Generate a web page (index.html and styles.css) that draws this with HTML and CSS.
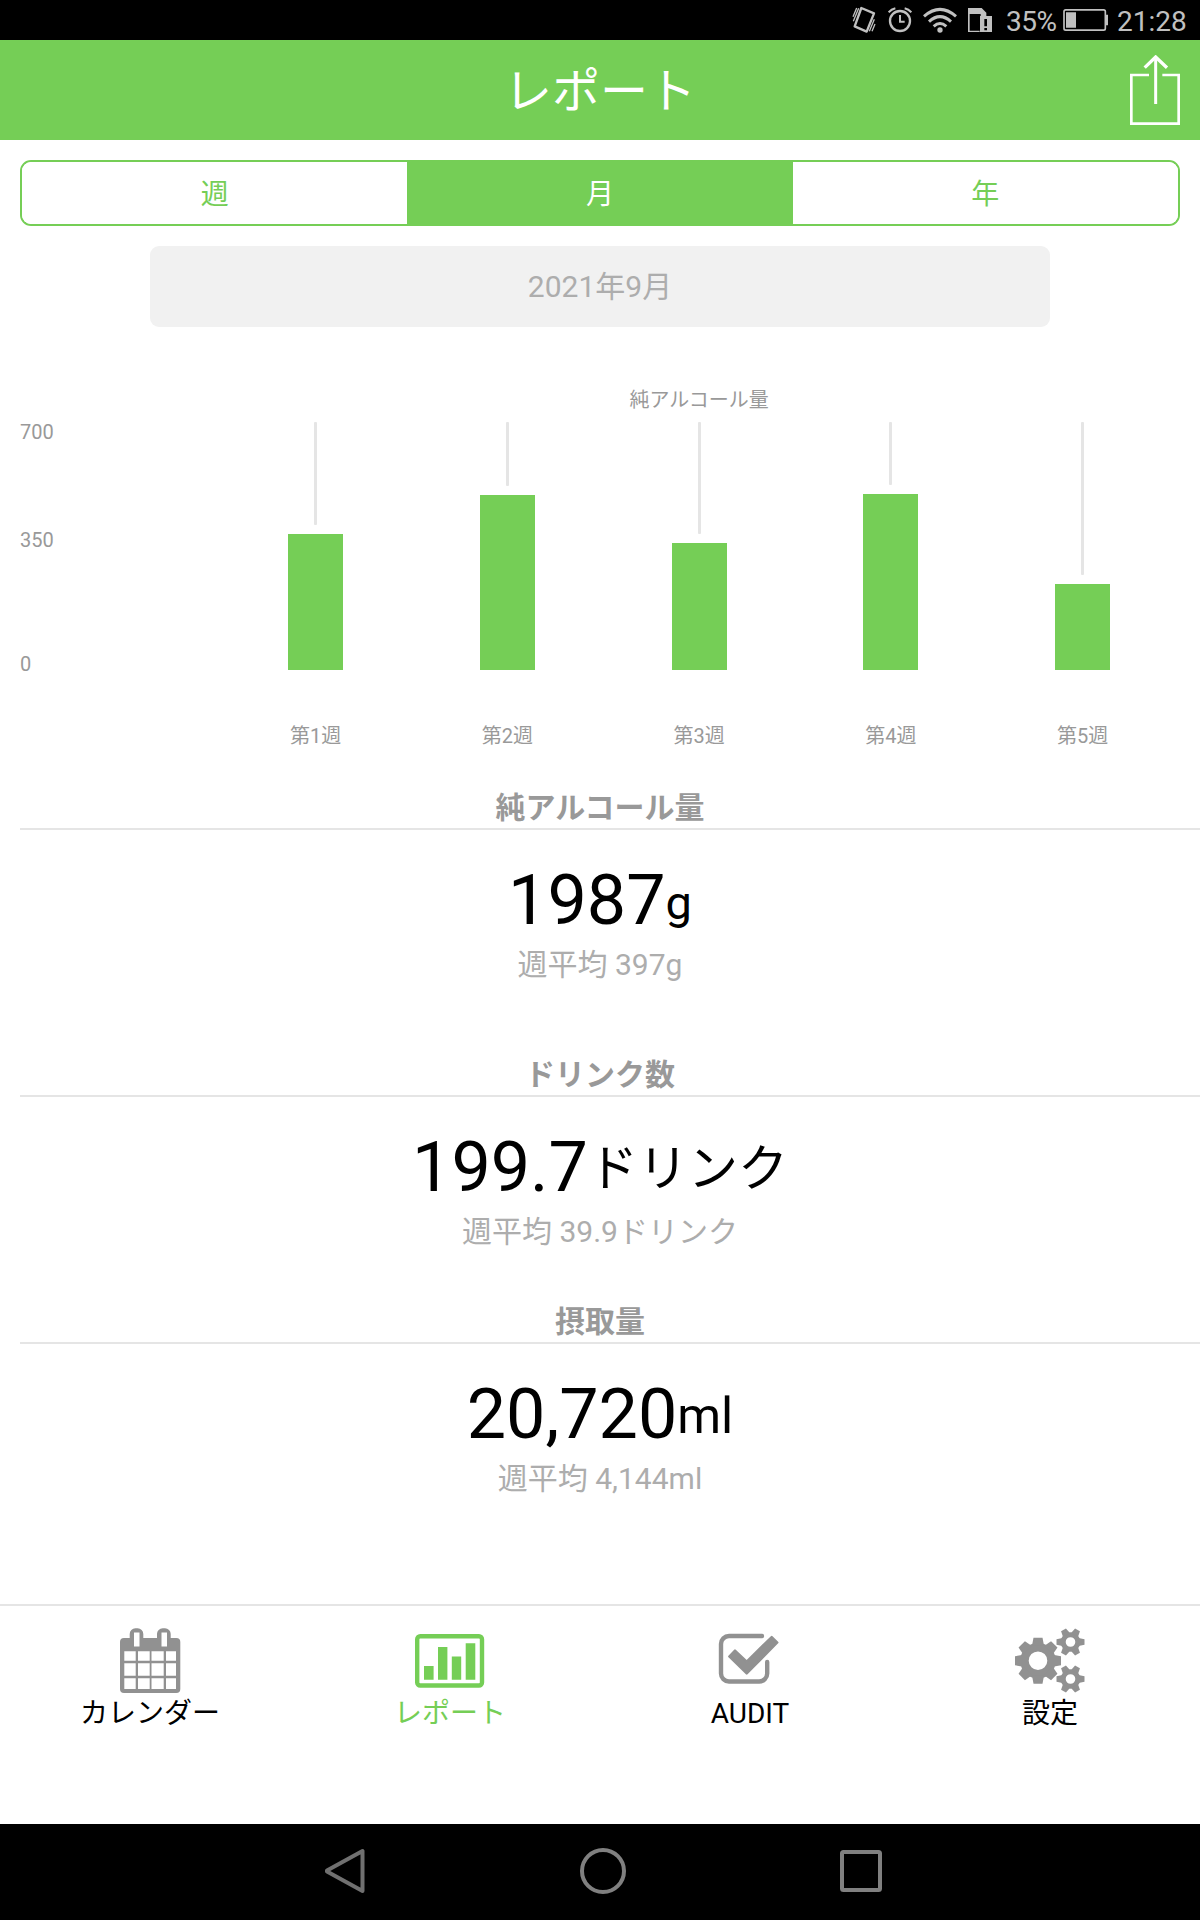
FILE: index.html
```html
<!DOCTYPE html>
<html lang="ja">
<head>
    <meta charset="UTF-8">
    <meta name="viewport" content="width=device-width, initial-scale=1.0">
    <title>レポート</title>
    <link rel="stylesheet" href="styles.css">
</head>
<body>
    <!-- Status bar -->
    <div class="status-bar">
        <svg class="vibrate" width="24" height="40" viewBox="0 0 72 120" fill="none" stroke="#c0c0c0">
            <path d="M28 24L66 40L44 95L8 79Z" stroke-width="7" stroke-linejoin="round"/>
            <path d="M3 50L14 24M4 64L20 25M52 94L67 58M60 94L69 72" stroke-width="4"/>
        </svg>
        <svg class="alarm" width="24" height="40" viewBox="0 0 72 120" fill="none" stroke="#c0c0c0">
            <circle cx="36" cy="63" r="30" stroke-width="7"/>
            <path d="M36 45V65H50" stroke-width="6"/>
            <path d="M2 37Q10 28 22 25M50 25Q62 28 70 37" stroke-width="6"/>
        </svg>
        <svg class="wifi" width="34" height="40" viewBox="0 0 102 120" fill="none" stroke="#c0c0c0" stroke-width="9">
            <path d="M3 49Q51 7 99 49M18 65Q51 35 84 65M32 79Q51 62 70 79"/>
            <circle cx="51" cy="90" r="8" fill="#c0c0c0" stroke="none"/>
        </svg>
        <svg class="sdcard" width="24" height="40" viewBox="0 0 72 120">
            <path d="M0 24H41L55 38V48H38V42H5V92H35V96H0Z" fill="#c0c0c0"/>
            <path d="M36 48H72V96H36Z" fill="#c0c0c0"/>
            <path d="M53 57V79M53 84V91" stroke="#000" stroke-width="8"/>
        </svg>
        <span class="percent">35%</span>
        <svg class="battery" width="45" height="40" viewBox="0 0 135 120">
            <rect x="3" y="29.500" width="124" height="61" rx="5" fill="none" stroke="#c0c0c0" stroke-width="5"/>
            <path d="M9 37H39V83H9ZM128 44H135V76H128Z" fill="#c0c0c0"/>
        </svg>
        <span class="clock">21:28</span>
    </div>

    <header class="header">
        <h1>レポート</h1>
        <svg class="share" width="50" height="70" viewBox="0 0 150 210" fill="none" stroke="#fff">
            <path d="M57 60H4V206H146V60H97" stroke-width="8"/>
            <path d="M77 8V147" stroke-width="9"/>
            <path d="M44 38L77 6L111 38" stroke-width="10"/>
        </svg>
    </header>

    <main>
        <div class="segment">
            <button class="segment-btn">週</button>
            <button class="segment-btn active">月</button>
            <button class="segment-btn">年</button>
        </div>
        <div class="period">2021年9月</div>

        <!-- Chart -->
        <div class="chart">
            <div class="y-axis">
                <span>700</span>
                <span>350</span>
                <span>0</span>
            </div>
            <div class="plot">
                <div class="chart-title">純アルコール量</div>
                <div class="columns">
                    <div class="column">
                        <div class="line"></div>
                        <div class="bar" style="height: 136px"></div>
                        <div class="week">第1週</div>
                    </div>
                    <div class="column">
                        <div class="line"></div>
                        <div class="bar" style="height: 175px"></div>
                        <div class="week">第2週</div>
                    </div>
                    <div class="column">
                        <div class="line"></div>
                        <div class="bar" style="height: 127px"></div>
                        <div class="week">第3週</div>
                    </div>
                    <div class="column">
                        <div class="line"></div>
                        <div class="bar" style="height: 176px"></div>
                        <div class="week">第4週</div>
                    </div>
                    <div class="column">
                        <div class="line"></div>
                        <div class="bar" style="height: 86px"></div>
                        <div class="week">第5週</div>
                    </div>
                </div>
            </div>
        </div>

        <!-- Totals -->
        <section class="total alcohol">
            <h2>純アルコール量</h2>
            <div class="value">1987<span class="unit">g</span></div>
            <div class="average">週平均 397g</div>
        </section>
        <section class="total drinks">
            <h2>ドリンク数</h2>
            <div class="value">199.7<span class="unit">ドリンク</span></div>
            <div class="average">週平均 39.9ドリンク</div>
        </section>
        <section class="total intake">
            <h2>摂取量</h2>
            <div class="value">20,720<span class="unit">ml</span></div>
            <div class="average">週平均 4,144ml</div>
        </section>
    </main>

    <!-- Tab bar -->
    <nav class="tabs">
        <a class="tab">
            <svg width="70" height="70" viewBox="0 0 70 70">
                <path fill="#919191" fill-rule="evenodd" d="M9 12H14.700V8A5.700 5.700 0 0 1 20.400 2.300H22.600A5.700 5.700 0 0 1 28.300 8V12H42V8A5.700 5.700 0 0 1 47.700 2.300H50A5.700 5.700 0 0 1 55.700 8V12H61.300A4 4 0 0 1 65.300 16V63A4 4 0 0 1 61.300 67H9A4 4 0 0 1 5 63V16A4 4 0 0 1 9 12Z
                    M19 6.500V20.500H24.500V6.500ZM46.500 6.500V20.500H52V6.500Z
                    M9.300 25.300V34.700H20.700V25.300ZM23 25.300V34.700H34.700V25.300ZM36.500 25.300V34.700H48.700V25.300ZM51 25.300V34.700H61V25.300Z
                    M9.300 37.300V49.700H20.700V37.300ZM23 37.300V49.700H34.700V37.300ZM36.500 37.300V49.700H48.700V37.300ZM51 37.300V49.700H61V37.300Z
                    M9.300 52.300V63H20.700V52.300ZM23 52.300V63H34.700V52.300ZM36.500 52.300V63H48.700V52.300ZM51 52.300V63H61V52.300Z"/>
            </svg>
            <span>カレンダー</span>
        </a>
        <a class="tab active">
            <svg width="70" height="70" viewBox="0 0 70 70" fill="#75ce56">
                <rect x="2.200" y="10.200" width="64.800" height="49.300" rx="3" fill="none" stroke="#75ce56" stroke-width="4.400"/>
                <path d="M9 40H18.600V53.700H9ZM23 21H32.400V53.700H23ZM36.800 30.600H46.200V53.700H36.800ZM50.700 17.300H60.300V53.700H50.700Z"/>
            </svg>
            <span>レポート</span>
        </a>
        <a class="tab">
            <svg width="70" height="70" viewBox="0 0 70 70" fill="#919191">
                <path d="M47 10H14A8 8 0 0 0 6 18V47.500A8 8 0 0 0 14 55.500H44.200A8 8 0 0 0 52.200 47.500V36" fill="none" stroke="#919191" stroke-width="4.400" stroke-linecap="round"/>
                <path d="M14.300 30.500L20 24.500L31.700 35.500L56.700 11L62.300 16.500L31.700 47.500Z" stroke="#919191" stroke-width="2.400" stroke-linejoin="round"/>
            </svg>
            <span>AUDIT</span>
        </a>
        <a class="tab">
            <svg width="70" height="70" viewBox="0 0 70 70" fill="#919191">
                <defs>
                    <path id="tooth" d="M-6 -15L-4.500 -23H4.500L6 -15Z"/>
                    <g id="gear">
                        <circle r="7.300" fill="none" stroke="#919191" stroke-width="5"/>
                        <path id="cog" d="M-4 -8L-2.800 -14H2.800L4 -8Z" transform="rotate(30)"/>
                        <use href="#cog" transform="rotate(60)"/>
                        <use href="#cog" transform="rotate(120)"/>
                        <use href="#cog" transform="rotate(180)"/>
                        <use href="#cog" transform="rotate(240)"/>
                        <use href="#cog" transform="rotate(300)"/>
                    </g>
                </defs>
                <g transform="translate(23 34.700)">
                    <circle r="13.500" fill="none" stroke="#919191" stroke-width="8.400"/>
                    <use href="#tooth"/>
                    <use href="#tooth" transform="rotate(45)"/>
                    <use href="#tooth" transform="rotate(90)"/>
                    <use href="#tooth" transform="rotate(135)"/>
                    <use href="#tooth" transform="rotate(180)"/>
                    <use href="#tooth" transform="rotate(225)"/>
                    <use href="#tooth" transform="rotate(270)"/>
                    <use href="#tooth" transform="rotate(315)"/>
                </g>
                <use href="#gear" transform="translate(55.500 16)"/>
                <use href="#gear" transform="translate(55.500 53)"/>
            </svg>
            <span>設定</span>
        </a>
    </nav>

    <!-- System navigation -->
    <div class="system-nav">
        <svg class="back" width="42" height="48" viewBox="0 0 42 48" fill="none" stroke="#707070" stroke-width="4" stroke-linejoin="round">
            <path d="M38.500 4V44L3 24.500V23.500Z"/>
        </svg>
        <svg class="home" width="48" height="48" viewBox="0 0 48 48" fill="none" stroke="#808080" stroke-width="4">
            <circle cx="24" cy="24" r="21"/>
        </svg>
        <svg class="recent" width="42" height="42" viewBox="0 0 42 42" fill="none" stroke="#808080" stroke-width="4">
            <rect x="2" y="2" width="38" height="38" rx="1.500"/>
        </svg>
    </div>
</body>
</html>
```
FILE: styles.css
```css
* {
    box-sizing: border-box;
}

body {
    display: flex;
    flex-direction: column;
    width: 1200px;
    height: 1920px;
    margin: 0;
    background-color: #fff;
    color: #000;
    font-family: Roboto, "Noto Sans CJK JP", sans-serif;
    overflow: hidden;
}

svg {
    display: block;
    flex: none;
}

h1, h2 {
    margin: 0;
}

/* Status bar */
.status-bar {
    display: flex;
    justify-content: flex-end;
    height: 40px;
    padding-right: 12px;
    background-color: #000;
    color: #c0c0c0;
    font-size: 28px;
    line-height: 43px;
}

.alarm {
    margin-left: 12px;
}

.wifi {
    margin-left: 11px;
}

.sdcard {
    margin-left: 11px;
}

.percent {
    width: 56px;
    margin-left: 14px;
    letter-spacing: -0.5px;
}

.battery {
    margin-left: 1px;
}

.clock {
    width: 71px;
    margin-left: 9px;
}

/* Header */
.header {
    display: grid;
    grid-template-columns: 1fr auto 1fr;
    align-items: center;
    height: 100px;
    padding: 0 20px;
    background-color: #75ce56;
    color: #fff;
}

.header h1 {
    grid-column: 2;
    padding-top: 3px;
    font-size: 48px;
    font-weight: 400;
    line-height: 97px;
}

.share {
    justify-self: end;
}

main {
    height: 1464px;
}

/* Week / month / year switch */
.segment {
    display: flex;
    height: 66px;
    margin: 20px 20px 0;
    border: 2px solid #75ce56;
    border-radius: 11px;
    overflow: hidden;
}

.segment-btn {
    flex: 1;
    padding: 4px 0 0;
    border: none;
    background-color: #fff;
    color: #75ce56;
    font-family: inherit;
    font-size: 28px;
    line-height: 58px;
}

.segment-btn.active {
    background-color: #75ce56;
    color: #fff;
}

.period {
    height: 81px;
    margin: 20px 150px 0;
    border-radius: 9px;
    background-color: #f1f1f1;
    color: #adadad;
    font-size: 30px;
    line-height: 82px;
    text-align: center;
}

/* Chart */
.chart {
    display: flex;
    height: 425px;
    padding: 59px 21.5px 0 20px;
    color: #999;
    font-size: 20px;
    line-height: 24px;
}

.y-axis {
    display: flex;
    flex-direction: column;
    width: 199.7px;
    padding-top: 34px;
}

.y-axis span + span {
    margin-top: 84px;
}

.y-axis span:last-child {
    margin-top: 100px;
}

.plot {
    flex: 1;
}

.chart-title {
    height: 36px;
    line-height: 29px;
    text-align: center;
}

.columns {
    display: flex;
}

.column {
    display: flex;
    flex: 1;
    flex-direction: column;
    align-items: center;
    height: 326px;
}

.line {
    flex: 1;
    width: 3px;
    margin-bottom: 9px;
    border-radius: 1px;
    background-color: #e5e5e5;
}

.bar {
    width: 55px;
    background-color: #75ce56;
}

.week {
    height: 78px;
    padding-top: 54px;
}

/* Totals */
.total {
    height: 267px;
    margin-left: 20px;
    text-align: center;
}

.drinks {
    height: 247px;
}

.total h2 {
    height: 78px;
    padding: 36px 20px 0 0;
    border-bottom: 2px solid #e5e5e5;
    color: #999;
    font-size: 30px;
    font-weight: 700;
    line-height: 40px;
}

.value {
    height: 113px;
    padding: 29px 20px 0 0;
    font-size: 70px;
    line-height: 82px;
}

.unit {
    position: relative;
    top: -5px;
    font-size: 50px;
    line-height: 50px;
}

.alcohol .unit {
    font-size: 47px;
}

.average {
    padding-right: 20px;
    color: #adadad;
    font-size: 30px;
    line-height: 44px;
}

/* Tab bar */
.tabs {
    display: flex;
    height: 220px;
    border-top: 2px solid #e5e5e5;
}

.tab {
    display: flex;
    flex: 1;
    flex-direction: column;
    align-items: center;
    padding-top: 20px;
    font-size: 28px;
    line-height: 36px;
}

.tab.active {
    color: #75ce56;
}

/* System navigation */
.system-nav {
    display: flex;
    align-items: center;
    height: 96px;
    padding-left: 324px;
    padding-bottom: 3px;
    background-color: #000;
}

.home {
    margin-left: 213px;
}

.recent {
    margin-left: 213px;
}
```
